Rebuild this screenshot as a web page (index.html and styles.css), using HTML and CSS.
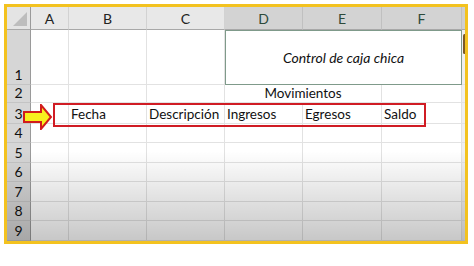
FILE: index.html
```html
<!DOCTYPE html>
<html>
<head>
    <title>Control de caja chica</title>
    <link rel="stylesheet" href="styles.css">
</head>
<body>
    <div class="frame">
        <div class="sheet">
            <div class="corner"><span class="tri"></span></div>
            <div class="colhead">A</div>
            <div class="colhead">B</div>
            <div class="colhead">C</div>
            <div class="colhead sel">D</div>
            <div class="colhead sel">E</div>
            <div class="colhead sel">F</div>
            <div class="colhead edge"></div>

            <!-- row 1 -->
            <div class="rowhead">1</div>
            <div class="cell"></div>
            <div class="cell"></div>
            <div class="cell"></div>
            <div class="cell title span3">Control de caja chica</div>
            <div class="cell edge"><span class="mark"></span></div>

            <!-- row 2 -->
            <div class="rowhead">2</div>
            <div class="cell"></div>
            <div class="cell"></div>
            <div class="cell"></div>
            <div class="cell center span2">Movimientos</div>
            <div class="cell"></div>
            <div class="cell edge"></div>

            <!-- row 3 -->
            <div class="rowhead">3</div>
            <div class="cell"></div>
            <div class="cell">Fecha</div>
            <div class="cell">Descripción</div>
            <div class="cell">Ingresos</div>
            <div class="cell">Egresos</div>
            <div class="cell">Saldo</div>
            <div class="cell edge"></div>
        </div>
        <div class="sheet rest" id="rest"></div>

        <div class="fade"></div>
        <div class="highlight"></div>
        <svg class="arrow" width="30" height="26" viewBox="0 0 30 26">
            <polygon points="1,8 18,8 18,1 28,13 18,25 18,18 1,18" fill="#f7f01e" stroke="#d21c1c" stroke-width="2" stroke-linejoin="miter"/>
        </svg>
    </div>

    <script>
        const rest = document.getElementById('rest');
        for (let r = 4; r <= 9; r++) {
            let html = `<div class="rowhead">${r}</div>`;
            for (let c = 0; c < 6; c++) html += '<div class="cell"></div>';
            html += '<div class="cell edge"></div>';
            rest.insertAdjacentHTML('beforeend', html);
        }
    </script>
</body>
</html>
```

FILE: styles.css
```css
body {
    margin: 0;
    background-color: #fff;
    font-family: Lato, "Open Sans", sans-serif;
    color: #111;
}

.frame {
    position: relative;
    margin: 4px 0 0 4px;
    width: 458px;
    height: 234px;
    border: 3px solid #f3c21f;
    overflow: hidden;
    background-color: #fff;
}

.sheet {
    display: grid;
    grid-template-columns: 24px 38px 78px 78px 78px 79px 80px 3px;
    grid-template-rows: 23px 55px 18px 21px;
}

.sheet.rest {
    grid-template-rows: 19px 20px 19px 20px 19px 20px;
}

.corner {
    background-color: #e4e4e4;
    border-right: 1px solid #9a9a9a;
    border-bottom: 1px solid #a8a8a8;
    position: relative;
}

.tri {
    position: absolute;
    right: 3px;
    bottom: 3px;
    width: 0;
    height: 0;
    border-left: 14px solid transparent;
    border-bottom: 14px solid #bdbdbd;
}

.colhead {
    background-color: #e8e8e8;
    border-right: 1px solid #d2d2d2;
    border-bottom: 1px solid #a8a8a8;
    display: flex;
    align-items: center;
    justify-content: center;
    font-size: 14px;
    color: #222;
}

.colhead.sel {
    background-color: #d3d3d3;
    border-right-color: #c0c0c0;
    color: #2d4a3a;
}

.colhead.edge {
    background-color: #cfcfcf;
    border-right: none;
}

.rowhead {
    background-color: #d6d6d6;
    border-right: 1px solid #9a9a9a;
    border-bottom: 1px solid #c4c4c4;
    display: flex;
    align-items: flex-end;
    justify-content: center;
    padding-bottom: 1px;
    font-size: 14px;
    line-height: 17px;
    color: #111;
}

.cell {
    border-right: 1px solid #e2e2e2;
    border-bottom: 1px solid #e2e2e2;
    font-size: 13.5px;
    line-height: 18px;
    padding-left: 2px;
    display: flex;
    align-items: flex-end;
    white-space: nowrap;
}

.cell.edge {
    border-right: none;
    padding: 0;
    background-color: #efefef;
    position: relative;
}

.mark {
    position: absolute;
    left: 1px;
    top: 4px;
    width: 3px;
    height: 20px;
    border-radius: 2px;
    background-color: #7a5a2a;
}

.span3 {
    grid-column: span 3;
}

.span2 {
    grid-column: span 2;
}

.title {
    border: 1px solid #7f9a8a;
    justify-content: center;
    align-items: center;
    font-style: italic;
    font-size: 14px;
    padding-left: 0;
}

.center {
    justify-content: center;
    padding-left: 0;
}

.fade {
    position: absolute;
    left: 0;
    right: 0;
    top: 144px;
    bottom: 0;
    background: linear-gradient(to bottom, rgba(0, 0, 0, 0), rgba(0, 0, 0, 0.22));
    pointer-events: none;
}

.highlight {
    position: absolute;
    left: 46px;
    top: 96px;
    width: 369px;
    height: 20px;
    border: 2px solid #d01c24;
}

.arrow {
    position: absolute;
    left: 16px;
    top: 97px;
}
```
